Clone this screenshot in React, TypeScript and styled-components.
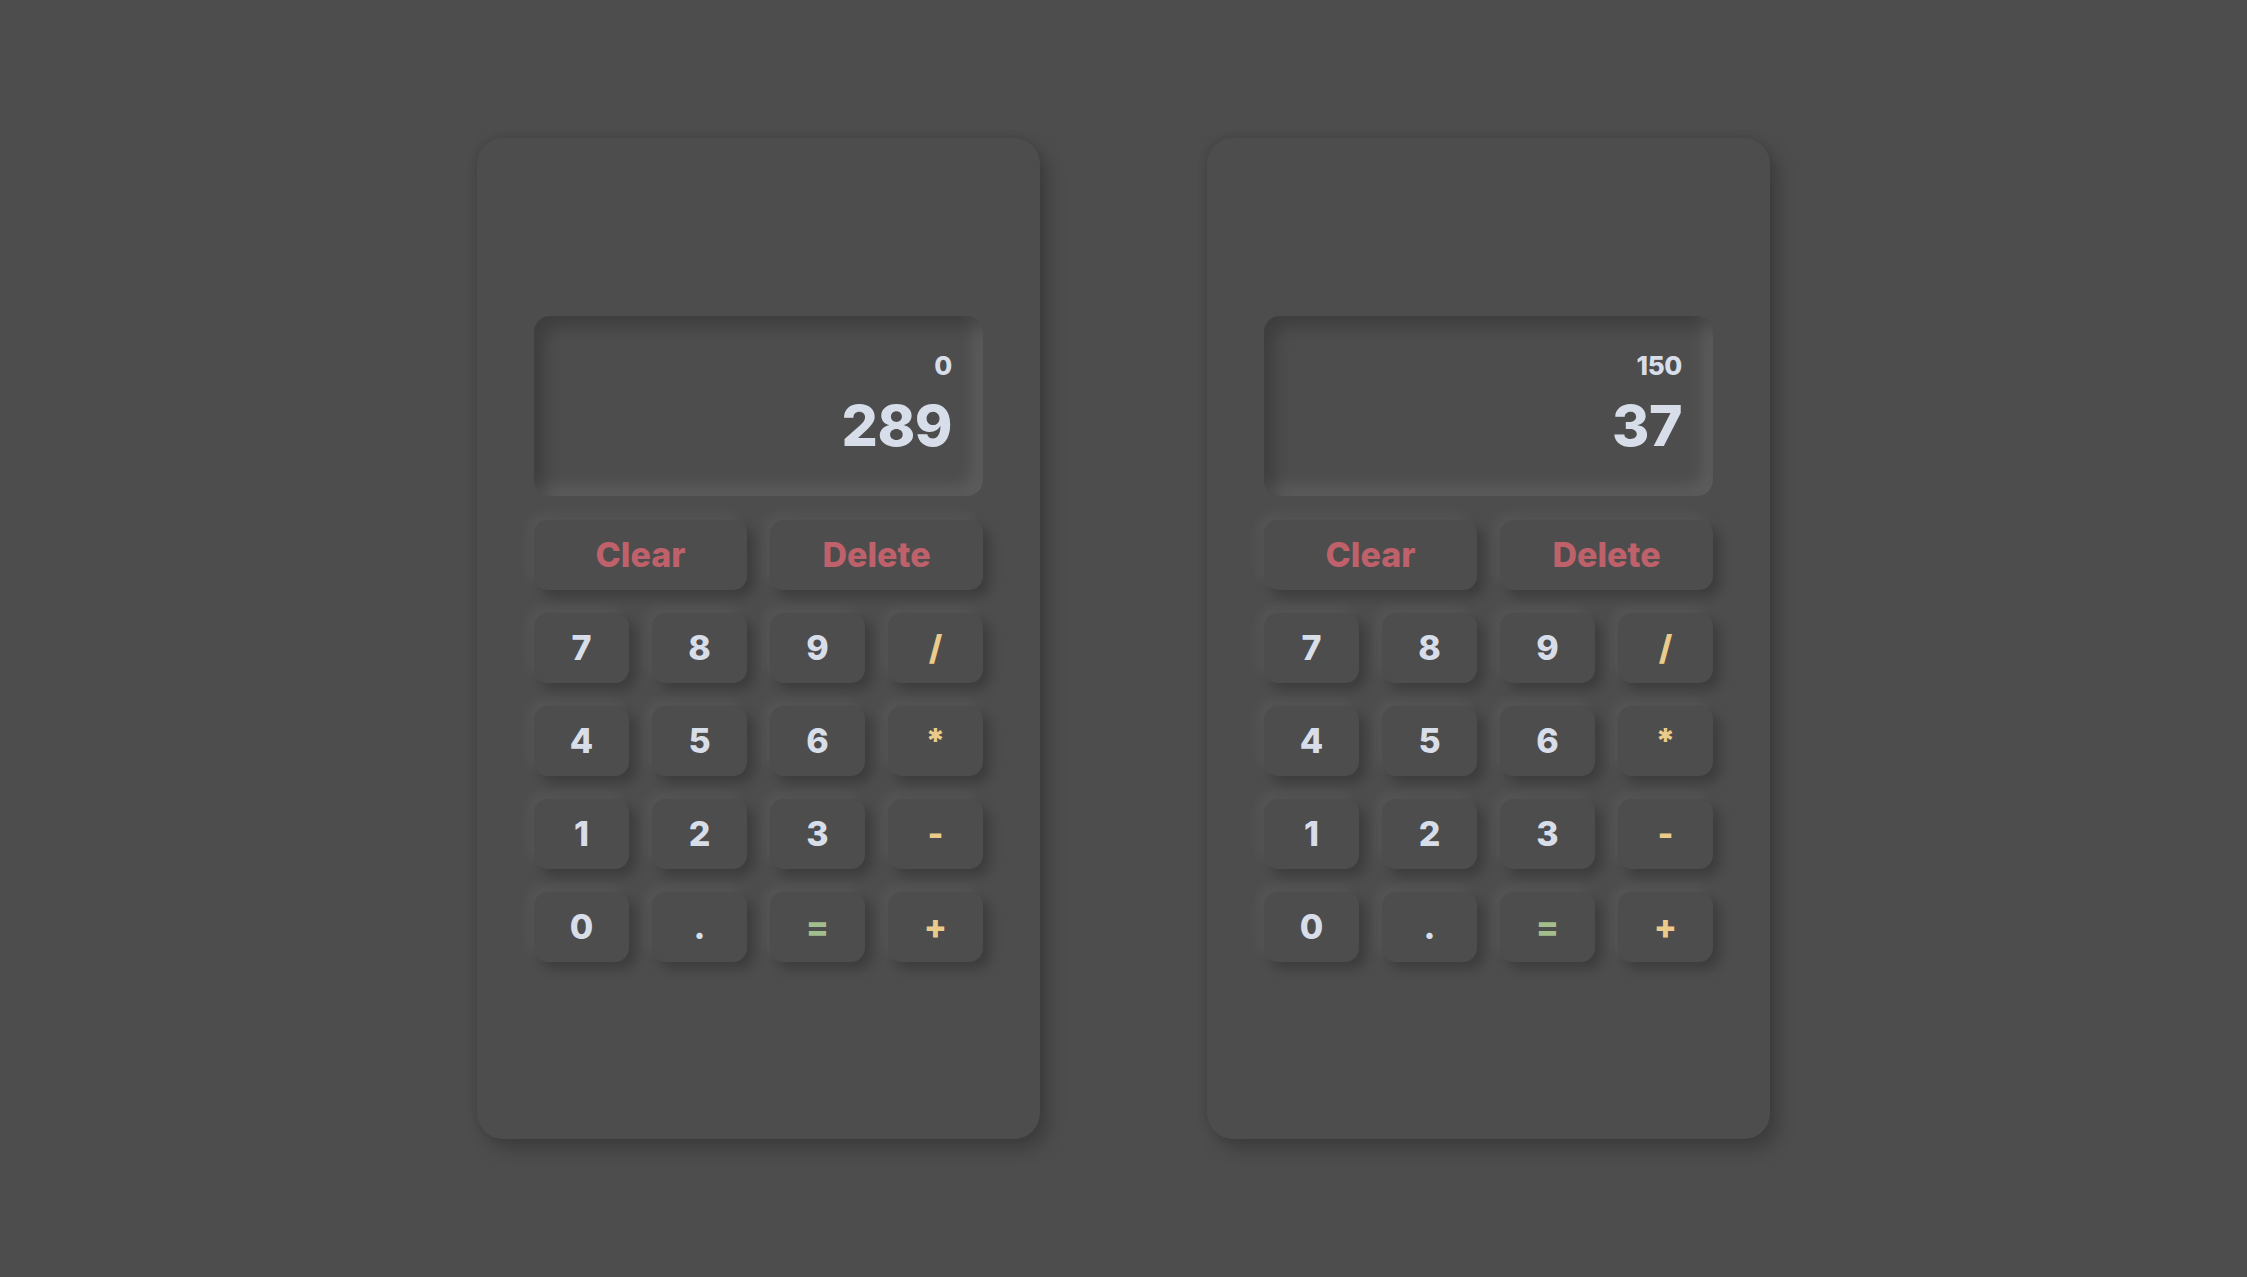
import React from "react";
import styled, { createGlobalStyle } from "styled-components";

const GlobalStyle = createGlobalStyle`
  html, body {
    margin: 0;
    padding: 0;
    background: #4d4d4d;
  }
  body {
    font-family: Inter, "Open Sans", "DejaVu Sans", sans-serif;
  }
`;

const Page = styled.main`
  display: flex;
  justify-content: center;
  align-items: center;
  gap: 167px;
  width: 100%;
  height: 100vh;
  background: #4d4d4d;
`;

const Calculator = styled.section`
  box-sizing: border-box;
  width: 563px;
  height: 1001px;
  border-radius: 26px;
  background: #4d4d4d;
  box-shadow: 8px 10px 18px rgba(0, 0, 0, 0.22), -2px -2px 8px rgba(0, 0, 0, 0.08);
  display: flex;
  flex-direction: column;
  justify-content: center;
  align-items: center;
  gap: 24px;
`;

const Display = styled.div`
  box-sizing: border-box;
  width: 449px;
  height: 180px;
  border-radius: 16px;
  background: #4d4d4d;
  box-shadow: inset 10px 10px 16px rgba(0, 0, 0, 0.2),
    inset -10px -10px 16px rgba(255, 255, 255, 0.09);
  display: flex;
  flex-direction: column;
  align-items: flex-end;
  padding: 37px 31px 0 0;
  color: #d8dee9;
  font-weight: 800;
`;

const Previous = styled.div`
  font-size: 26px;
  line-height: 1;
  letter-spacing: -0.3px;
`;

const Current = styled.div`
  margin-top: 18px;
  font-size: 57px;
  line-height: 1;
  letter-spacing: -0.5px;
`;

const Keypad = styled.div`
  display: grid;
  grid-template-columns: repeat(4, 95px);
  grid-auto-rows: 70px;
  gap: 23px;
`;

type Variant = "num" | "op" | "eq" | "action";

const colors: Record<Variant, string> = {
  num: "#d8dee9",
  op: "#ebcb8b",
  eq: "#a3be8c",
  action: "#bf616a",
};

const Key = styled.button<{ $variant: Variant; $span?: number }>`
  grid-column: span ${(p) => p.$span ?? 1};
  border: none;
  border-radius: 14px;
  background: #4d4d4d;
  box-shadow: 7px 7px 12px rgba(0, 0, 0, 0.22),
    -6px -6px 12px rgba(255, 255, 255, 0.05);
  color: ${(p) => colors[p.$variant]};
  font-family: Inter, "Open Sans", "DejaVu Sans", sans-serif;
  font-weight: 800;
  font-size: 34px;
  display: flex;
  align-items: center;
  justify-content: center;
  padding: 0;
  cursor: pointer;
`;

const keys: { label: string; variant: Variant }[] = [
  { label: "7", variant: "num" },
  { label: "8", variant: "num" },
  { label: "9", variant: "num" },
  { label: "/", variant: "op" },
  { label: "4", variant: "num" },
  { label: "5", variant: "num" },
  { label: "6", variant: "num" },
  { label: "*", variant: "op" },
  { label: "1", variant: "num" },
  { label: "2", variant: "num" },
  { label: "3", variant: "num" },
  { label: "-", variant: "op" },
  { label: "0", variant: "num" },
  { label: ".", variant: "num" },
  { label: "=", variant: "eq" },
  { label: "+", variant: "op" },
];

function Calc({ prev, current }: { prev: string; current: string }) {
  return (
    <Calculator>
      <Display>
        <Previous>{prev}</Previous>
        <Current>{current}</Current>
      </Display>
      <Keypad>
        <Key $variant="action" $span={2}>
          Clear
        </Key>
        <Key $variant="action" $span={2}>
          Delete
        </Key>
        {keys.map((k) => (
          <Key key={k.label} $variant={k.variant}>
            {k.label}
          </Key>
        ))}
      </Keypad>
    </Calculator>
  );
}

export default function App() {
  return (
    <>
      <GlobalStyle />
      <Page>
        <Calc prev="0" current="289" />
        <Calc prev="150" current="37" />
      </Page>
    </>
  );
}
